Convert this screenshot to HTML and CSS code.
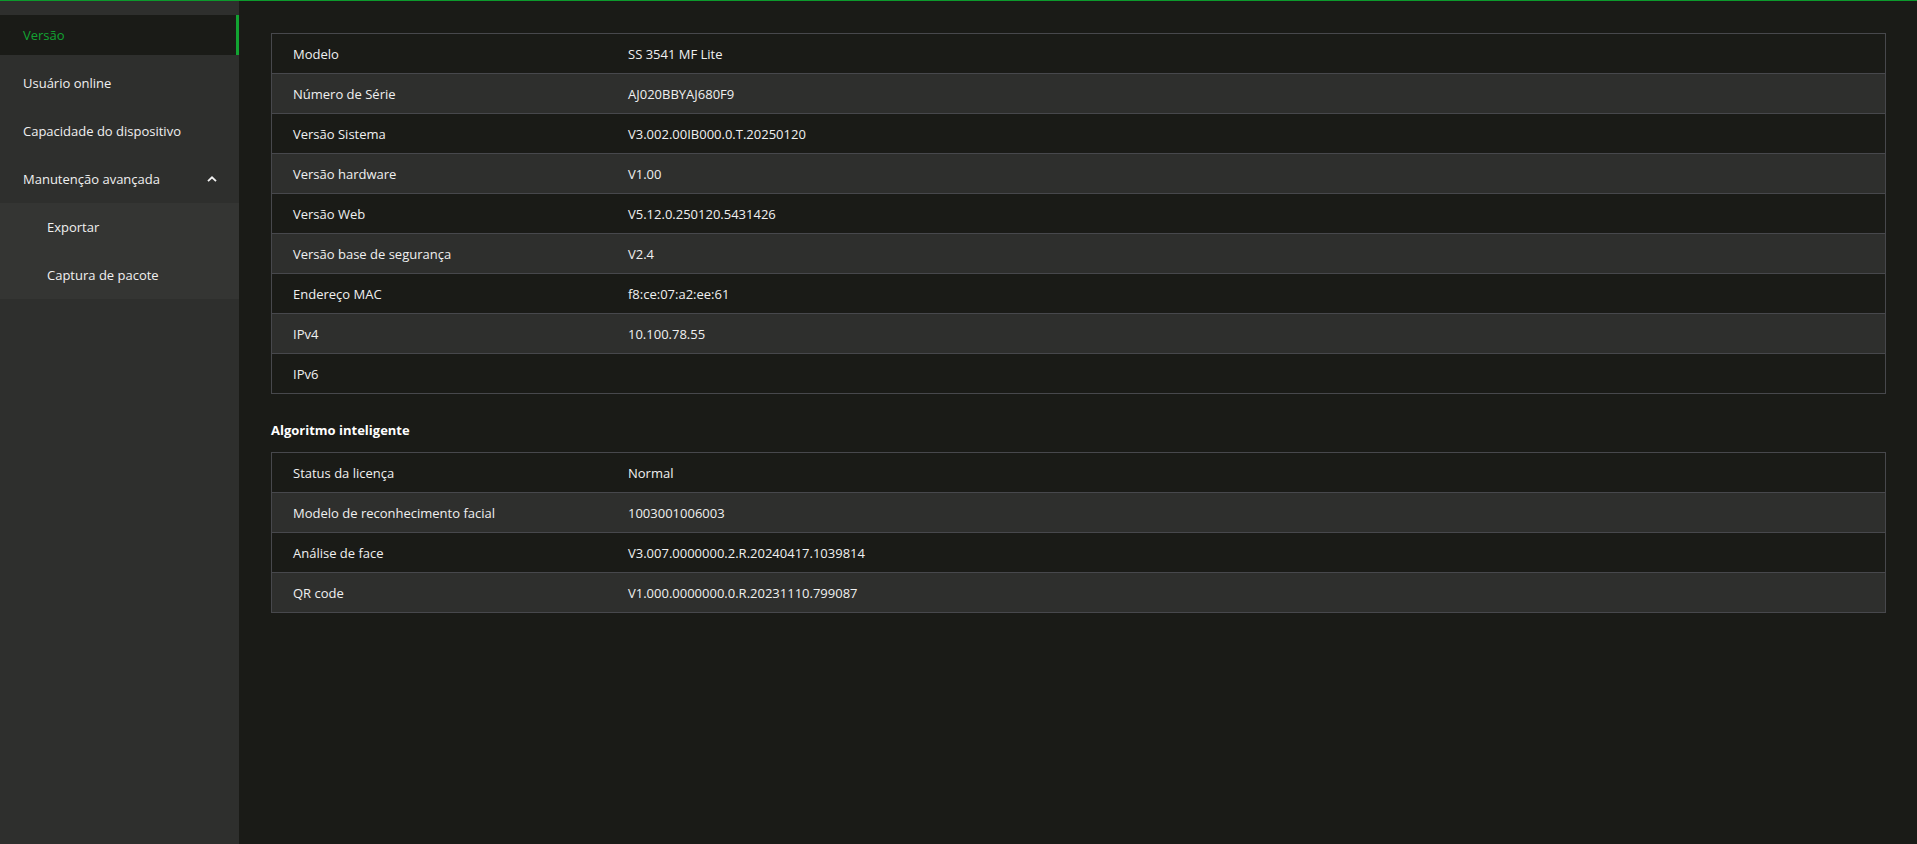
FILE: index.html
```html
<!DOCTYPE html>
<html lang="pt">
<head>
<meta charset="utf-8">
<title>Versão</title>
<link rel="stylesheet" href="styles.css">
</head>
<body>
<div class="app">
  <aside class="sidebar">
    <nav class="menu">
      <div class="menu-item active">Versão</div>
      <div class="menu-item">Usuário online</div>
      <div class="menu-item">Capacidade do dispositivo</div>
      <div class="menu-item has-sub">
        <span>Manutenção avançada</span>
        <svg class="chev" width="10" height="6" viewBox="0 0 10 6"><path d="M1 5.2 L5 1.3 L9 5.2" fill="none" stroke="#f2f2f2" stroke-width="1.8"/></svg>
      </div>
      <div class="submenu">
        <div class="sub-item">Exportar</div>
        <div class="sub-item">Captura de pacote</div>
      </div>
    </nav>
  </aside>
  <main class="content">
    <table class="info">
      <tr><td class="k">Modelo</td><td>SS 3541 MF Lite</td></tr>
      <tr><td class="k">Número de Série</td><td>AJ020BBYAJ680F9</td></tr>
      <tr><td class="k">Versão Sistema</td><td>V3.002.00IB000.0.T.20250120</td></tr>
      <tr><td class="k">Versão hardware</td><td>V1.00</td></tr>
      <tr><td class="k">Versão Web</td><td>V5.12.0.250120.5431426</td></tr>
      <tr><td class="k">Versão base de segurança</td><td>V2.4</td></tr>
      <tr><td class="k">Endereço MAC</td><td>f8:ce:07:a2:ee:61</td></tr>
      <tr><td class="k">IPv4</td><td>10.100.78.55</td></tr>
      <tr><td class="k">IPv6</td><td></td></tr>
    </table>
    <h3 class="section-title">Algoritmo inteligente</h3>
    <table class="info">
      <tr><td class="k">Status da licença</td><td>Normal</td></tr>
      <tr><td class="k">Modelo de reconhecimento facial</td><td>1003001006003</td></tr>
      <tr><td class="k">Análise de face</td><td>V3.007.0000000.2.R.20240417.1039814</td></tr>
      <tr><td class="k">QR code</td><td>V1.000.0000000.0.R.20231110.799087</td></tr>
    </table>
  </main>
</div>
</body>
</html>
```
FILE: styles.css
```css
html, body {
  margin: 0;
  padding: 0;
  height: 100%;
}
body {
  background: #1a1b17;
  color: #ececec;
  font-family: "Open Sans", "Noto Sans", "Liberation Sans", sans-serif;
  font-size: 13px;
}
.app {
  display: flex;
  height: 100%;
  border-top: 1px solid #0c9a2c;
  box-sizing: border-box;
}
.sidebar {
  width: 239px;
  flex: 0 0 239px;
  background: #2e2f2d;
  padding-top: 10px;
  box-sizing: border-box;
}
.menu {
  display: flex;
  flex-direction: column;
}
.menu-item {
  height: 40px;
  margin: 4px 0;
  display: flex;
  align-items: center;
  justify-content: space-between;
  padding: 0 22px 0 23px;
  box-sizing: border-box;
  color: #f0f0f0;
}
.menu-item.active {
  background: #1a1b17;
  color: #12a332;
  box-shadow: inset -3px 0 0 #12a332;
}
.chev {
  display: block;
}
.submenu {
  background: #343533;
  display: flex;
  flex-direction: column;
}
.sub-item {
  height: 48px;
  display: flex;
  align-items: center;
  padding-left: 47px;
  color: #f0f0f0;
}
.content {
  flex: 1;
  padding: 32px 31px 0 32px;
  box-sizing: border-box;
}
.info {
  width: 100%;
  table-layout: fixed;
  border-collapse: collapse;
  border: 1px solid #47484c;
}
.info tr {
  height: 40px;
}
.info tr:nth-child(even) {
  background: #2e2f2d;
}
.info td {
  border-top: 1px solid #47484c;
  padding: 0 20px 0 21px;
  color: #f0f0f0;
  white-space: nowrap;
}
.info td.k {
  width: 294px;
}
.section-title {
  margin: 26px 0 12px 0;
  font-size: 13px;
  font-weight: 700;
  line-height: 20px;
  color: #ffffff;
}
```
